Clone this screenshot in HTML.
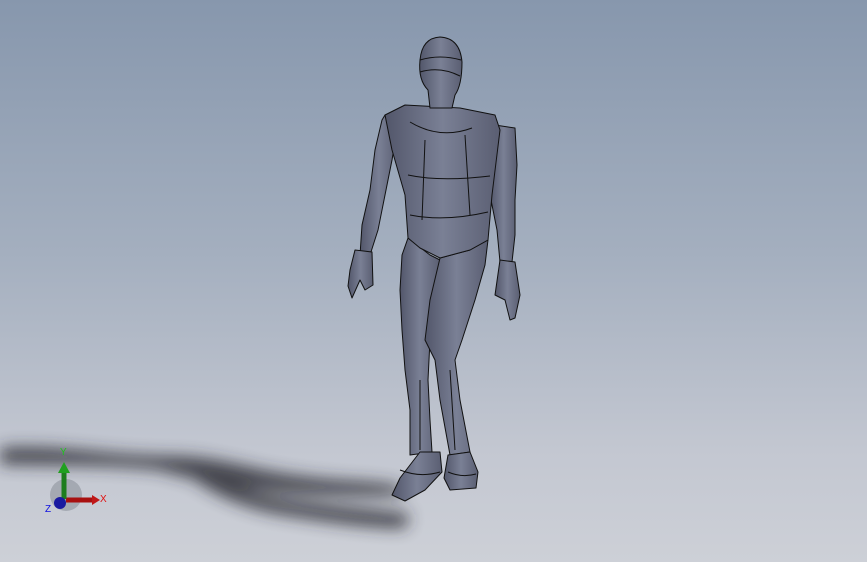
<!DOCTYPE html>
<html><head><meta charset="utf-8"><style>
html,body{margin:0;padding:0}
body{width:867px;height:562px;overflow:hidden;background:linear-gradient(180deg,#8797ad 0%,#a4afbf 45%,#c3c7d1 80%,#cdd0d7 100%);position:relative;font-family:"Liberation Sans",sans-serif}
svg{position:absolute;left:0;top:0}
</style></head><body>
<svg width="867" height="562" viewBox="0 0 867 562">
<defs>
<filter id="b" x="-20%" y="-50%" width="140%" height="200%"><feGaussianBlur stdDeviation="8"/></filter>
<linearGradient id="g" x1="0" x2="1" y1="0" y2="0"><stop offset="0" stop-color="#52566a"/><stop offset=".5" stop-color="#7a8095"/><stop offset="1" stop-color="#5a5e72"/></linearGradient>
</defs>
<g fill="#25272e" opacity=".8" filter="url(#b)">
<path d="M0,448 C60,444 110,456 170,456 C220,456 250,470 300,476 C340,482 370,480 400,486 L402,496 C360,496 320,496 280,492 C240,488 200,482 160,470 C110,464 60,466 0,464 Z"/>
<path d="M200,470 C240,492 280,500 320,504 C350,508 380,510 410,514 L405,528 C370,528 330,522 290,516 C250,510 220,498 195,480 Z"/>
</g>
<g fill="url(#g)" stroke="#111" stroke-width="1" stroke-linejoin="round">
<path d="M385,115 L398,125 392,160 385,195 378,230 370,255 360,255 362,225 370,190 375,150 382,120Z"/>
<path d="M355,250 L372,252 373,285 365,290 360,280 352,298 348,286 350,270Z"/>
<path d="M495,125 L515,128 517,165 515,200 515,235 512,262 500,262 497,230 490,195 492,150Z"/>
<path d="M500,260 L515,262 520,295 515,318 510,320 505,300 495,295Z"/>
<path d="M408,238 L430,255 440,260 432,300 430,340 428,380 430,420 432,452 410,455 410,410 405,370 402,330 400,290 402,255Z"/>
<path d="M440,258 L470,250 488,240 485,265 475,300 462,340 455,360 460,400 470,452 450,455 440,400 435,360 425,340 430,300Z"/>
<path d="M385,115 L405,105 460,108 495,115 500,130 492,195 488,240 470,250 440,258 420,248 408,238 405,195 392,150Z"/>
<path d="M430,108 L428,90 Q418,80 420,60 Q422,38 440,37 Q460,38 462,62 Q462,85 455,95 L452,108Z"/>
<path d="M400,478 L420,452 440,452 442,472 425,490 405,501 392,495Z"/>
<path d="M448,455 L470,452 478,472 476,488 450,490 444,478Z"/>
</g>
<g fill="none" stroke="#111" stroke-width="1">
<path d="M410,122 Q440,140 472,128"/><path d="M408,175 Q440,182 490,176"/><path d="M410,215 Q445,222 488,212"/>
<path d="M420,60 Q440,54 461,60"/><path d="M420,72 Q440,66 460,76"/>
<path d="M425,140 L422,220"/><path d="M465,135 L470,215"/><path d="M420,380 L420,450"/><path d="M450,370 L455,450"/>
<path d="M400,470 Q420,478 440,472"/><path d="M448,472 Q462,478 476,474"/>
</g>
<g>
<circle cx="66" cy="495" r="16" fill="#8e929c" opacity=".6"/>
<path d="M66,500 L92,500" stroke="#a81010" stroke-width="5"/><path d="M92,495 L100,500 92,505Z" fill="#c01818"/>
<path d="M64,499 L64,472" stroke="#1e7d1e" stroke-width="5"/><path d="M58,473 L64,462 70,473Z" fill="#20a020"/>
<circle cx="60" cy="503" r="6" fill="#1a1aa0"/>
<text x="60" y="455" font-size="10" fill="#20c020">Y</text>
<text x="100" y="502" font-size="10" fill="#e01010">X</text>
<text x="45" y="512" font-size="10" fill="#1010e0">Z</text>
</g>
</svg>
</body></html>
